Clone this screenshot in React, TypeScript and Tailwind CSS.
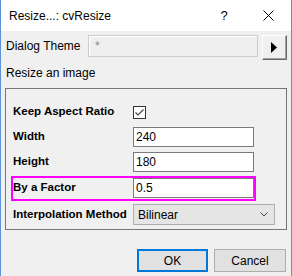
const font = { fontFamily: '"Liberation Sans", Arial, sans-serif' };

const Field = ({ value }: { value: string }) => (
  <div className="w-[121px] h-[20px] border border-[#7a7a7a] bg-white flex items-center pl-[2px] text-[12px] text-black">
    {value}
  </div>
);

const Label = ({ children }: { children: string }) => (
  <div className="w-[120px] text-[11.5px] font-bold text-black leading-none">{children}</div>
);

export default function App() {
  return (
    <div
      className="w-[292px] h-[276px] bg-[#f0f0f0] border-x border-[#5a93d6] flex flex-col text-black overflow-hidden"
      style={font}
    >
      {/* title bar */}
      <div className="h-[31px] bg-white flex items-center text-[12px] shrink-0">
        <div className="pl-[8px] flex-1">Resize...: cvResize</div>
        <div className="w-[10px] mr-[34px] text-[13px] text-center">?</div>
        <svg width="11" height="11" viewBox="0 0 11 11" className="mr-[17px]">
          <path d="M0.5 0.5 L10.5 10.5 M10.5 0.5 L0.5 10.5" stroke="#000" strokeWidth="1" />
        </svg>
      </div>

      {/* dialog theme */}
      <div className="flex items-start mt-[4px] pl-[5px]">
        <div className="w-[82px] h-[22px] flex items-center text-[12px]">Dialog Theme</div>
        <div className="w-[170px] h-[22px] border border-[#cccccc] bg-[#efefef] shadow-[inset_1px_1px_0_#ffffff] flex items-center pl-[6px] text-[12px] text-[#8a8a8a]">
          *
        </div>
        <div className="ml-[4px] w-[25px] h-[25px] bg-[#f0f0f0] border border-t-white border-l-white border-r-[#696969] border-b-[#696969] shadow-[inset_-1px_-1px_0_#a0a0a0] flex items-center justify-center">
          <svg width="7" height="11" viewBox="0 0 7 11">
            <path d="M0 0 L6 5.5 L0 11 Z" fill="#000" />
          </svg>
        </div>
      </div>

      <div className="pl-[5px] mt-[6px] text-[12px] h-[14px] leading-[14px]">Resize an image</div>

      {/* group box */}
      <div className="ml-[4px] mt-[8px] w-[282px] h-[142px] border border-[#767676] flex flex-col pt-[13px]">
        <div className="h-[20px] flex items-center pl-[7px]">
          <Label>Keep Aspect Ratio</Label>
          <div className="w-[13px] h-[13px] border border-[#333333] bg-white flex items-center justify-center">
            <svg width="11" height="11" viewBox="0 0 11 11">
              <path d="M1.5 5.5 L4 8 L9.5 2.5" stroke="#444" strokeWidth="1.2" fill="none" />
            </svg>
          </div>
        </div>
        <div className="h-[20px] mt-[5px] flex items-center pl-[7px]">
          <Label>Width</Label>
          <Field value="240" />
        </div>
        <div className="h-[20px] mt-[5px] flex items-center pl-[7px]">
          <Label>Height</Label>
          <Field value="180" />
        </div>
        <div className="ml-[5px] mt-[4px] w-[245px] h-[25px] border-2 border-[#ff00ff] flex items-start">
          <div className="h-[20px] flex items-center">
            <Label>By a Factor</Label>
            <Field value="0.5" />
          </div>
        </div>
        <div className="h-[21px] mt-[3px] flex items-center pl-[7px]">
          <Label>Interpolation Method</Label>
          <div className="w-[142px] h-[21px] border border-[#adadad] bg-[#e5e5e5] flex items-center pl-[4px] pr-[6px] text-[12px]">
            <div className="flex-1">Bilinear</div>
            <svg width="8" height="5" viewBox="0 0 8 5">
              <path d="M0.5 0.5 L4 4 L7.5 0.5" stroke="#444" strokeWidth="1" fill="none" />
            </svg>
          </div>
        </div>
      </div>

      {/* buttons */}
      <div className="mt-[19px] flex justify-end gap-[6px] pr-[5px]">
        <div className="w-[71px] h-[23px] border-2 border-[#0078d7] bg-[#e1e1e1] flex items-center justify-center text-[12px]">
          OK
        </div>
        <div className="w-[72px] h-[23px] border border-[#adadad] bg-[#e1e1e1] flex items-center justify-center text-[12px]">
          Cancel
        </div>
      </div>
    </div>
  );
}
